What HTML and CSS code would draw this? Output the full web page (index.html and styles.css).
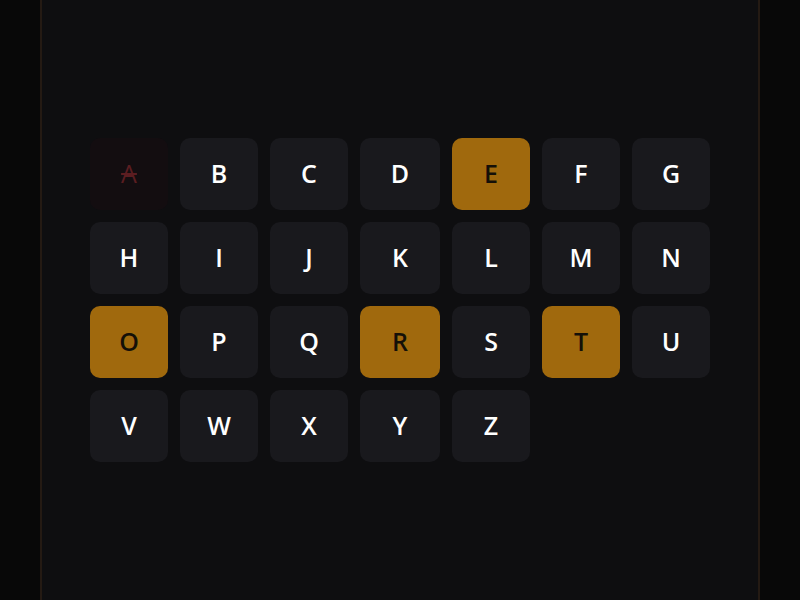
FILE: index.html
```html
<!DOCTYPE html>
<html lang="en">
<head>
<meta charset="utf-8">
<title>Letters</title>
<link rel="stylesheet" href="styles.css">
</head>
<body>
<div class="frame">
  <main class="panel">
    <div class="keyboard">
      <button class="key used">A</button>
      <button class="key">B</button>
      <button class="key">C</button>
      <button class="key">D</button>
      <button class="key hit">E</button>
      <button class="key">F</button>
      <button class="key">G</button>
      <button class="key">H</button>
      <button class="key">I</button>
      <button class="key">J</button>
      <button class="key">K</button>
      <button class="key">L</button>
      <button class="key">M</button>
      <button class="key">N</button>
      <button class="key hit">O</button>
      <button class="key">P</button>
      <button class="key">Q</button>
      <button class="key hit">R</button>
      <button class="key">S</button>
      <button class="key hit">T</button>
      <button class="key">U</button>
      <button class="key">V</button>
      <button class="key">W</button>
      <button class="key">X</button>
      <button class="key">Y</button>
      <button class="key">Z</button>
    </div>
  </main>
</div>
</body>
</html>
```

FILE: styles.css
```css
* { box-sizing: border-box; }
html, body {
  margin: 0;
  height: 100%;
  background: #080808;
  font-family: "Open Sans", "Noto Sans", sans-serif;
}
.frame {
  height: 100%;
  display: flex;
  justify-content: center;
}
.panel {
  width: 720px;
  height: 100%;
  background: #0e0e10;
  border-left: 2px solid #241a13;
  border-right: 2px solid #241a13;
  display: flex;
  align-items: center;
  justify-content: center;
}
.keyboard {
  display: grid;
  grid-template-columns: 78px 78px 78px 80px 78px 78px 78px;
  grid-auto-rows: 72px;
  gap: 12px;
}
.key {
  border: none;
  border-radius: 10px;
  background: #19191d;
  color: #ffffff;
  font-family: "Open Sans", "Noto Sans", sans-serif;
  font-size: 25px;
  font-weight: 600;
  padding: 0 0 2px;
  display: flex;
  align-items: center;
  justify-content: center;
}
.key.hit {
  background: #a0690d;
  color: #141008;
  font-weight: 600;
}
.key.used {
  background: #130d10;
  color: #5b1d21;
  text-decoration: line-through;
  text-decoration-thickness: 2px;
  font-weight: 500;
}
```
